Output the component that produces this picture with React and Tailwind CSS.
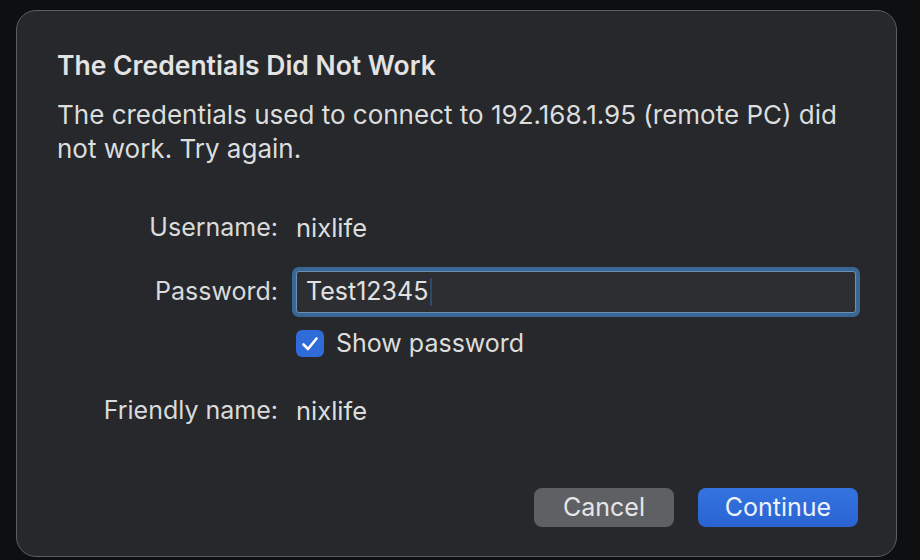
import React from 'react'

const font = { fontFamily: 'Inter, "Liberation Sans", sans-serif' }

function Row({ label, children, className = '' }) {
  return (
    <div className={`grid grid-cols-[261px_1fr] items-center gap-x-[18px] ${className}`}>
      <div className="text-right text-[25px] text-[#d9dadb]">{label}</div>
      <div>{children}</div>
    </div>
  )
}

export default function App() {
  return (
    <div className="h-[560px] w-[920px] bg-[#0e0f11] pl-[16px] pt-[10px]" style={font}>
      <div className="flex h-[547px] w-[881px] flex-col rounded-[20px] border border-[#5b5d60] bg-[#26282b]">
        <div className="px-[40px] pt-[38px]">
          <h1 className="text-[26.5px] font-semibold leading-[32px] text-[#e3e3e4]">
            The Credentials Did Not Work
          </h1>
          <p className="mt-[17px] text-[26px] leading-[34px] text-[#dcdddd]">
            The credentials used to connect to 192.168.1.95 (remote PC) did not work. Try again.
          </p>
        </div>

        <div className="mt-[43px] flex flex-col">
          <Row label="Username:" className="h-[34px]">
            <span className="text-[25.5px] text-[#dcdddd]">nixlife</span>
          </Row>
          <Row label="Password:" className="mt-[28px] h-[42px]">
            <div className="flex h-[42px] w-[560px] items-center rounded-[3px] border border-[#6a8fb8] bg-[#2c2e31] pl-[9px] ring-4 ring-[#3b6796]">
              <span className="text-[25px] text-[#e2e2e3]">Test12345</span>
              <span className="ml-[2px] h-[28px] w-[2px] bg-[#2d4a6e]" />
            </div>
          </Row>
          <Row label="" className="mt-[12px] h-[28px]">
            <div className="flex items-center gap-[12px]">
              <span className="flex h-[27px] w-[28px] items-center justify-center rounded-[6px] bg-[#2f6bd9]">
                <svg width="18" height="16" viewBox="0 0 18 16" fill="none">
                  <path d="M2.5 8.5 L7 13 L15.5 2.5" stroke="white" strokeWidth="2.6" strokeLinecap="round" strokeLinejoin="round" />
                </svg>
              </span>
              <span className="text-[25px] text-[#dcdddd]">Show password</span>
            </div>
          </Row>
          <Row label="Friendly name:" className="mt-[39px] h-[34px]">
            <span className="text-[25.5px] text-[#dcdddd]">nixlife</span>
          </Row>
        </div>

        <div className="mt-auto flex justify-end gap-[24px] pb-[29px] pr-[38px]">
          <button className="h-[39px] w-[140px] rounded-[8px] bg-[#5f6063] text-[25px] text-[#e6e6e7]">
            Cancel
          </button>
          <button className="h-[39px] w-[160px] rounded-[8px] bg-gradient-to-b from-[#3373e0] to-[#2a63d2] text-[25px] text-[#eef2fb]">
            Continue
          </button>
        </div>
      </div>
    </div>
  )
}
